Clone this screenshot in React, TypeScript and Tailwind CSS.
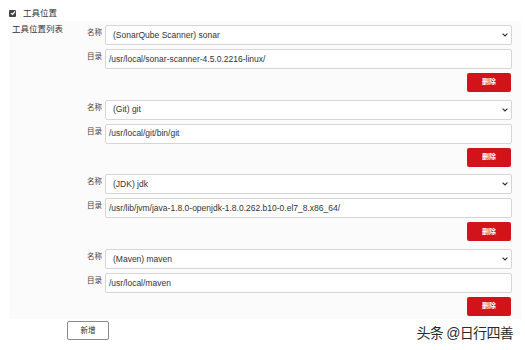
import React from "react";

const font = { fontFamily: '"Liberation Sans", "Noto Sans CJK SC", sans-serif' };

function Chevron() {
  return (
    <svg width="6" height="4" viewBox="0 0 6 4" className="shrink-0">
      <path d="M0.6 0.6 L3 3 L5.4 0.6" fill="none" stroke="#333" strokeWidth="1.2" />
    </svg>
  );
}

function Block({ name, dir }: { name: string; dir: string }) {
  return (
    <div className="flex flex-col">
      <div className="flex items-start">
        <div className="w-[26px] shrink-0 pr-[3px] pt-[2px] text-right text-[7.5px] leading-[12px] text-[#444]">名称</div>
        <div className="flex h-[20px] w-[407px] items-center justify-between rounded-[2px] border border-[#d6d6d6] bg-white pl-[7px] pr-[3px] text-[8.5px] text-[#333]">
          <span>{name}</span>
          <Chevron />
        </div>
      </div>
      <div className="mt-[4px] flex items-start">
        <div className="w-[26px] shrink-0 pr-[3px] pt-[2px] text-right text-[7.5px] leading-[12px] text-[#444]">目录</div>
        <div className="flex h-[20px] w-[407px] items-center rounded-[2px] border border-[#d6d6d6] bg-white pl-[3px] text-[8.5px] text-[#333]">
          {dir}
        </div>
      </div>
      <div className="mt-[4px] flex justify-end pr-[1px]">
        <div className="flex h-[19px] w-[44px] items-center justify-center rounded-[2px] bg-[#d2141a] text-[7px] font-bold text-white">
          删除
        </div>
      </div>
    </div>
  );
}

export default function App() {
  return (
    <div className="relative h-[350px] w-[525px] overflow-hidden bg-white" style={font}>
      <div className="flex items-center pl-[9px] pt-[9px]">
        <div className="flex h-[7px] w-[7px] items-center justify-center rounded-[1px] bg-[#444]">
          <svg width="6" height="6" viewBox="0 0 6 6">
            <path d="M1 3.1 L2.5 4.5 L5 1.5" fill="none" stroke="#fff" strokeWidth="1.2" />
          </svg>
        </div>
        <span className="ml-[7px] text-[8.5px] leading-[8px] text-[#333]">工具位置</span>
      </div>
      <div className="mt-[4px] ml-[10px] mr-[4px] flex bg-[#fbfbfb] pb-[3px]">
        <div className="w-[69px] shrink-0 pl-[2px] pt-[2px] text-[8.5px] leading-[12px] text-[#333]">工具位置列表</div>
        <div className="flex flex-col gap-[7.67px] pt-[4px]">
          <Block name="(SonarQube Scanner) sonar" dir="/usr/local/sonar-scanner-4.5.0.2216-linux/" />
          <Block name="(Git) git" dir="/usr/local/git/bin/git" />
          <Block name="(JDK) jdk" dir="/usr/lib/jvm/java-1.8.0-openjdk-1.8.0.262.b10-0.el7_8.x86_64/" />
          <Block name="(Maven) maven" dir="/usr/local/maven" />
        </div>
      </div>
      <div className="pl-[67px] pt-[2px]">
        <div className="flex h-[19px] w-[42px] items-center justify-center rounded-[2px] border border-[#8a8a8a] bg-white text-[7.5px] text-[#333]">
          新增
        </div>
      </div>
      <div
        className="absolute bottom-[9px] right-[12px] text-[14px] leading-[16px] tracking-[-0.7px] text-[#2a2a2a]"
        style={{ textShadow: "0 0 2px #fff, 0 0 2px #fff" }}
      >
        头条 @日行四善
      </div>
    </div>
  );
}
